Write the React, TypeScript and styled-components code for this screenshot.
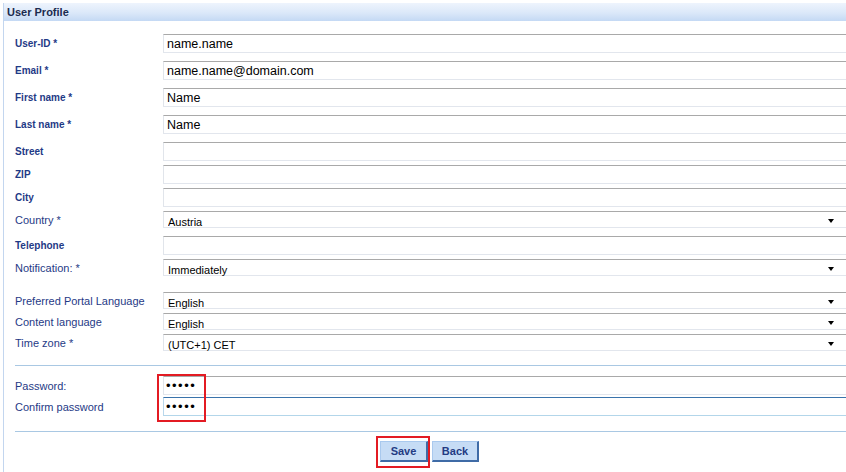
import styled, { createGlobalStyle } from "styled-components";
import { ReactElement } from "react";

const GlobalStyle = createGlobalStyle`
    html, body {
        margin: 0;
        padding: 0;
        background: #ffffff;
        overflow: hidden;
    }

    body {
        font-family: "Liberation Sans", Arial, sans-serif;
    }
`;

const Panel = styled.section`
    margin: 3px 0 0 3px;
    border-left: 1px solid #c3d6ef;
    height: 469px;
    display: flex;
    flex-direction: column;
`;

const PanelHeader = styled.header`
    height: 18px;
    padding-left: 3px;
    display: flex;
    align-items: center;
    background: linear-gradient(to bottom, #eef4fd 0%, #dbe8f9 55%, #c4d9f4 100%);
    font-size: 11px;
    font-weight: bold;
    color: #1b2b4f;
`;

const Form = styled.form`
    padding-left: 11px;
    display: flex;
    flex-direction: column;
`;

const Row = styled.div<{ $gap: number; $height: number }>`
    margin-top: ${(p) => p.$gap}px;
    height: ${(p) => p.$height}px;
    display: flex;
    align-items: center;
`;

const Label = styled.label<{ $bold?: boolean }>`
    width: 148px;
    flex-shrink: 0;
    font-size: ${(p) => (p.$bold ? "10px" : "11px")};
    font-weight: ${(p) => (p.$bold ? "bold" : "normal")};
    color: #1f3a86;
    white-space: nowrap;
`;

const TextInput = styled.input<{ $focused?: boolean }>`
    flex: 1;
    height: 100%;
    box-sizing: border-box;
    margin: 0;
    padding: 0 0 0 3px;
    border: none;
    border-top: 1px solid ${(p) => (p.$focused ? "#3a73ab" : "#a9a9a9")};
    border-left: 1px solid ${(p) => (p.$focused ? "#b9d7ec" : "#e1e5eb")};
    border-bottom: 1px solid ${(p) => (p.$focused ? "#b3d6ea" : "#e2e6ed")};
    font-family: "Liberation Sans", Arial, sans-serif;
    font-size: 12.5px;
    color: #000000;
    background: #ffffff;
    outline: none;

    &[type="password"] {
        font-size: 13px;
        letter-spacing: 1.5px;
        padding-left: 2px;
    }
`;

const SelectBox = styled.div`
    flex: 1;
    height: 100%;
    box-sizing: border-box;
    position: relative;
    border-top: 1px solid #a9a9a9;
    border-left: 1px solid #e1e5eb;
    border-bottom: 1px solid #e2e6ed;

    &::after {
        content: "";
        position: absolute;
        right: 12px;
        top: 50%;
        margin-top: -1px;
        border-left: 3px solid transparent;
        border-right: 3px solid transparent;
        border-top: 4px solid #000000;
    }
`;

const Select = styled.select`
    appearance: none;
    width: 100%;
    height: 100%;
    margin: 0;
    padding: 0 0 2px 4px;
    border: none;
    background: transparent;
    font-family: "Liberation Sans", Arial, sans-serif;
    font-size: 11px;
    color: #000000;
    outline: none;
`;

const Separator = styled.hr<{ $gap: number }>`
    margin: ${(p) => p.$gap}px 0 0 0;
    height: 0;
    border: none;
    border-top: 1px solid #a9c8e3;
`;

const PasswordGroup = styled.div`
    position: relative;
    display: flex;
    flex-direction: column;
`;

const Highlight = styled.span`
    position: absolute;
    border: 2px solid #e31b23;
    pointer-events: none;
`;

const PasswordHighlight = styled(Highlight)`
    left: 142px;
    top: 8px;
    width: 45px;
    height: 44px;
`;

const ButtonBar = styled.div`
    margin-top: 9px;
    padding-right: 2px;
    display: flex;
    justify-content: center;
    gap: 4px;
`;

const ButtonWrap = styled.span`
    position: relative;
    display: inline-flex;
`;

const SaveHighlight = styled(Highlight)`
    left: -4px;
    top: -5px;
    right: -2px;
    bottom: -6px;
`;

const Button = styled.button<{ $width: number }>`
    width: ${(p) => p.$width}px;
    height: 21px;
    box-sizing: border-box;
    margin: 0;
    padding: 0;
    background: #c6dcf5;
    border-top: 1px solid #a9c9ee;
    border-left: 1px solid #a9c9ee;
    border-right: 2px solid #3f6ba6;
    border-bottom: 2px solid #3f6ba6;
    font-family: "Liberation Sans", Arial, sans-serif;
    font-size: 11px;
    font-weight: bold;
    color: #233b83;
    cursor: pointer;
`;

interface FieldRowProps {
    label: string;
    gap: number;
    bold?: boolean;
    value?: string;
    type?: string;
    focused?: boolean;
}

const FieldRow = ({ label, gap, bold, value = "", type = "text", focused }: FieldRowProps): ReactElement => (
    <Row $gap={gap} $height={19}>
        <Label $bold={bold}>{label}</Label>
        <TextInput type={type} value={value} readOnly $focused={focused} />
    </Row>
);

interface SelectRowProps {
    label: string;
    gap: number;
    value: string;
    bold?: boolean;
}

const SelectRow = ({ label, gap, value, bold }: SelectRowProps): ReactElement => (
    <Row $gap={gap} $height={17}>
        <Label $bold={bold}>{label}</Label>
        <SelectBox>
            <Select value={value} onChange={() => undefined}>
                <option value={value}>{value}</option>
            </Select>
        </SelectBox>
    </Row>
);

export default function App(): ReactElement {
    return (
        <>
            <GlobalStyle />
            <Panel>
                <PanelHeader>User Profile</PanelHeader>
                <Form onSubmit={(e) => e.preventDefault()}>
                    <FieldRow label="User-ID *" gap={13} bold value="name.name" />
                    <FieldRow label="Email *" gap={8} bold value="name.name@domain.com" />
                    <FieldRow label="First name *" gap={8} bold value="Name" />
                    <FieldRow label="Last name *" gap={8} bold value="Name" />
                    <FieldRow label="Street" gap={8} bold />
                    <FieldRow label="ZIP" gap={4} bold />
                    <FieldRow label="City" gap={4} bold />
                    <SelectRow label="Country *" gap={4} value="Austria" />
                    <FieldRow label="Telephone" gap={8} bold />
                    <SelectRow label="Notification: *" gap={4} value="Immediately" />
                    <SelectRow label="Preferred Portal Language" gap={16} value="English" />
                    <SelectRow label="Content language" gap={4} value="English" />
                    <SelectRow label="Time zone *" gap={4} value="(UTC+1) CET" />
                    <Separator $gap={14} />
                    <PasswordGroup>
                        <FieldRow label="Password:" gap={10} type="password" value="12345" />
                        <FieldRow label="Confirm password" gap={2} type="password" value="12345" focused />
                        <PasswordHighlight />
                    </PasswordGroup>
                    <Separator $gap={15} />
                    <ButtonBar>
                        <ButtonWrap>
                            <Button type="submit" $width={48}>Save</Button>
                            <SaveHighlight />
                        </ButtonWrap>
                        <Button type="button" $width={47}>Back</Button>
                    </ButtonBar>
                </Form>
            </Panel>
        </>
    );
}
